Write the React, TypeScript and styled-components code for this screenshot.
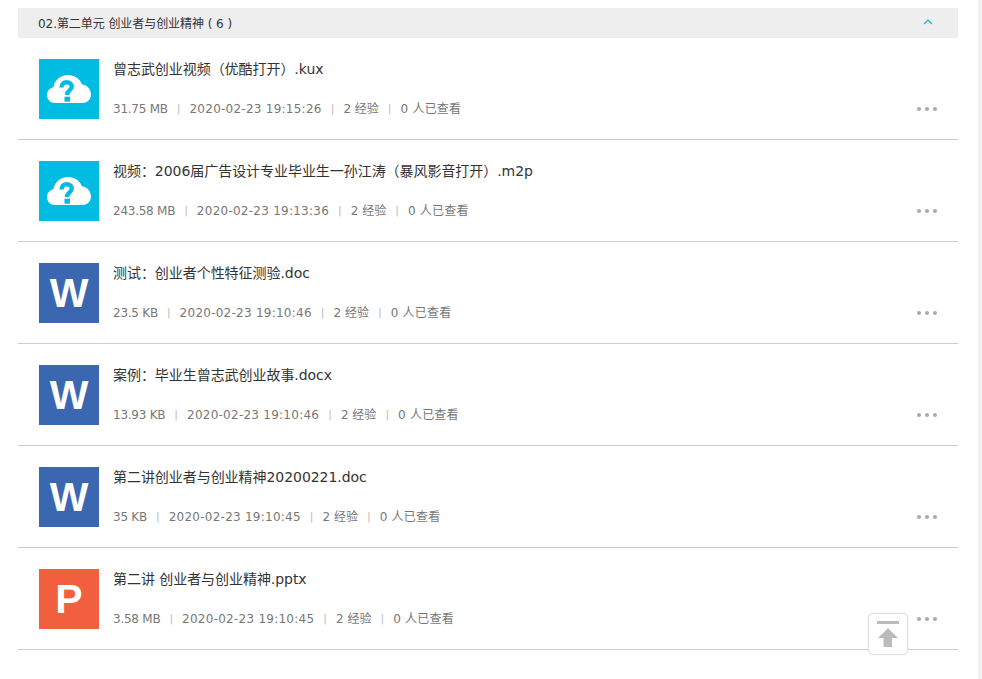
import React from 'react'
import styled, { createGlobalStyle } from 'styled-components'

const GlobalStyle = createGlobalStyle`
  html, body { margin: 0; padding: 0; background: #fff; overflow: hidden; }
  body { font-family: "DejaVu Sans", "Noto Sans CJK SC", sans-serif; }
`

const Page = styled.div`
  display: flex;
  width: 982px;
  height: 679px;
  overflow: hidden;
`
const Content = styled.div`
  flex: 1;
  padding: 8px 20px 0 18px;
`
const Track = styled.div`
  width: 4px;
  background: #f1f1f1;
`
const SectionHead = styled.div`
  display: flex;
  align-items: center;
  justify-content: space-between;
  height: 30px;
  padding: 0 25px 2px 20px;
  box-sizing: border-box;
  background: #eeeeee;
  color: #333;
  font-size: 12px;
  letter-spacing: -0.06px;
`
const Row = styled.div`
  position: relative;
  display: flex;
  gap: 14px;
  height: 80px;
  padding: 21px 0 0 21px;
  border-bottom: 1px solid #cccccc;
`
const Thumb = styled.div<{ $bg: string }>`
  display: flex;
  align-items: center;
  justify-content: center;
  width: 60px;
  height: 60px;
  flex: none;
  background: ${p => p.$bg};
  color: #fff;
  font-family: "Liberation Sans", Arial, sans-serif;
  font-weight: 700;
  font-size: 41px;
  line-height: 60px;
`
const Info = styled.div`
  display: flex;
  flex-direction: column;
  justify-content: space-between;
  height: 60px;
`
const Title = styled.div`
  color: #333;
  font-size: 14px;
  line-height: 20px;
  letter-spacing: -0.05px;
`
const Meta = styled.div`
  display: flex;
  color: #777;
  font-size: 12px;
  line-height: 20px;
`
const Size = styled.span`
  letter-spacing: -0.25px;
`
const Time = styled.span`
  letter-spacing: 0.25px;
`
const Views = styled.span`
  letter-spacing: 0.2px;
`
const Sep = styled.span`
  margin: 0 9px;
  color: #bbb;
  font-size: 11px;
`
const More = styled.div`
  position: absolute;
  right: 21px;
  top: 69px;
  display: flex;
  gap: 4px;
`
const Dot = styled.i`
  width: 4px;
  height: 4px;
  border-radius: 50%;
  background: #aaa;
`
const TopButton = styled.div`
  position: absolute;
  left: 868px;
  top: 613px;
  display: flex;
  align-items: center;
  justify-content: center;
  width: 40px;
  height: 42px;
  box-sizing: border-box;
  background: #fff;
  border: 1px solid #ddd;
  border-radius: 5px;
  box-shadow: 0 0 2px rgba(0, 0, 0, 0.08);
`

const CloudIcon = () => (
  <svg width="44" height="28" viewBox="0 0 44 28">
    <path fill="#fff" d="M8 28C3.500 28 0 24.500 0 20c0-4 3-7.200 6.500-7.800C7.500 5 13.500 0 21 0c6.500 0 12 3.800 14 9.500 5.500.5 9 5 9 10 0 5-4 8.500-9 8.500z" />
    <path fill="none" stroke="#00bce2" strokeWidth="4.400" d="M14.500 12.500c0-3.300 2.300-5.200 5.200-5.200 2.900 0 5.100 1.700 5.100 4.300 0 3.900-4.800 3.900-4.800 8.400" />
    <rect x="17.500" y="21.700" width="5.500" height="5" fill="#00bce2" />
  </svg>
)

const TopIcon = () => (
  <svg width="22" height="26" viewBox="0 0 22 26">
    <rect x="0" y="0" width="22" height="3" fill="#bbb" />
    <path fill="#bbb" d="M11 7l10 10h-6v9H6.500v-9H1z" />
  </svg>
)

type FileRow = { kind: 'cloud' | 'W' | 'P', title: string, size: string, time: string }

const files: FileRow[] = [
  { kind: 'cloud', title: '曾志武创业视频（优酷打开）.kux', size: '31.75 MB', time: '2020-02-23 19:15:26' },
  { kind: 'cloud', title: '视频：2006届广告设计专业毕业生一孙江涛（暴风影音打开）.m2p', size: '243.58 MB', time: '2020-02-23 19:13:36' },
  { kind: 'W', title: '测试：创业者个性特征测验.doc', size: '23.5 KB', time: '2020-02-23 19:10:46' },
  { kind: 'W', title: '案例：毕业生曾志武创业故事.docx', size: '13.93 KB', time: '2020-02-23 19:10:46' },
  { kind: 'W', title: '第二讲创业者与创业精神20200221.doc', size: '35 KB', time: '2020-02-23 19:10:45' },
  { kind: 'P', title: '第二讲 创业者与创业精神.pptx', size: '3.58 MB', time: '2020-02-23 19:10:45' },
]

const thumbColors = { cloud: '#00bce2', W: '#3b67b0', P: '#f15f3e' }

export default function App() {
  return (
    <Page>
      <GlobalStyle />
      <Content>
        <SectionHead>
          <span>02.第二单元 创业者与创业精神 ( 6 )</span>
          <svg width="10" height="6" viewBox="0 0 10 6">
            <path d="M1 5l4-4 4 4" fill="none" stroke="#29b6d8" strokeWidth="1.300" />
          </svg>
        </SectionHead>
        {files.map(f => (
          <Row key={f.title}>
            <Thumb $bg={thumbColors[f.kind]}>{f.kind === 'cloud' ? <CloudIcon /> : f.kind}</Thumb>
            <Info>
              <Title>{f.title}</Title>
              <Meta>
                <Size>{f.size}</Size><Sep>|</Sep>
                <Time>{f.time}</Time><Sep>|</Sep>
                <span>2 经验</span><Sep>|</Sep>
                <Views>0 人已查看</Views>
              </Meta>
            </Info>
            <More><Dot /><Dot /><Dot /></More>
          </Row>
        ))}
      </Content>
      <Track />
      <TopButton><TopIcon /></TopButton>
    </Page>
  )
}
